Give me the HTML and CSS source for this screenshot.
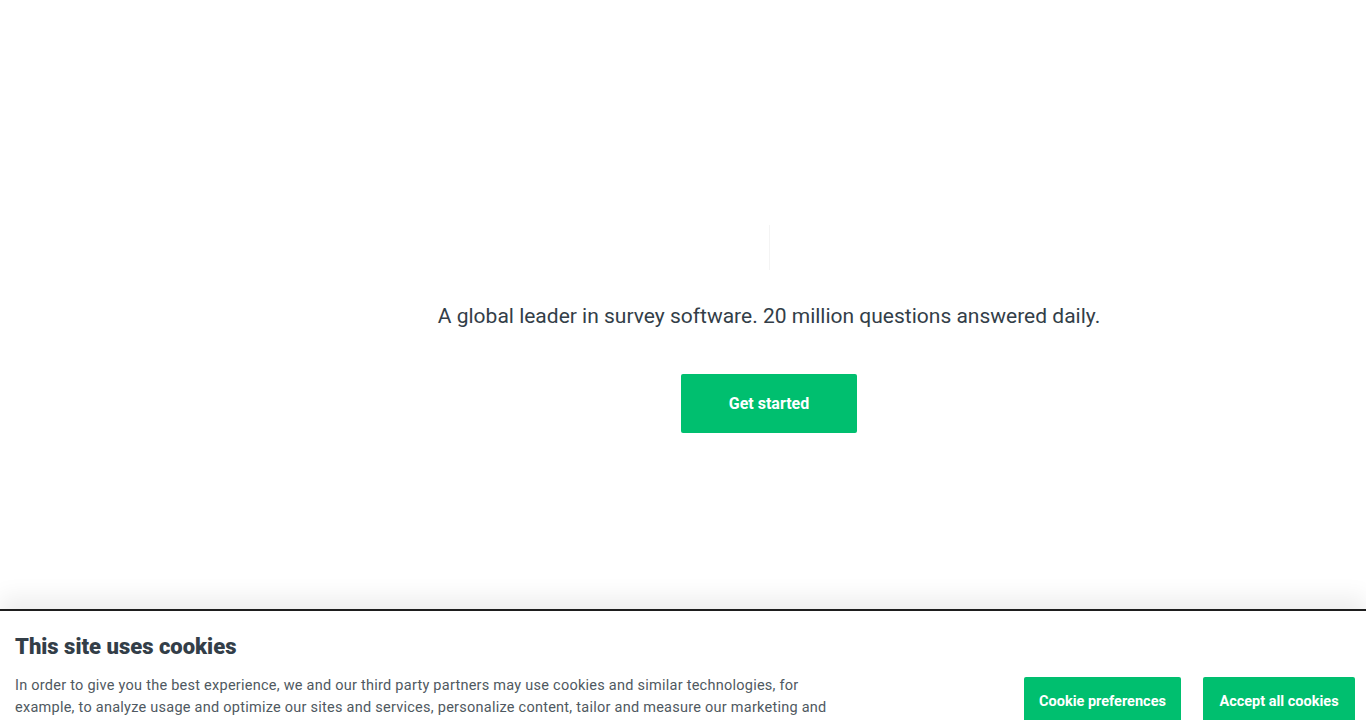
FILE: index.html
```html
<!DOCTYPE html>
<html lang="en">

<head>
    <meta charset="UTF-8">
    <meta name="viewport" content="width=device-width, initial-scale=1.0">
    <title>SurveyMonkey</title>
    <link rel="stylesheet" href="styles.css">
</head>

<body>

    <main class="hero">
        <div class="hero-divider"></div>
        <p class="hero-tagline">A global leader in survey software. 20 million questions answered daily.</p>
        <a class="btn btn-large" href="#">Get started</a>
    </main>

    <div class="cookie-banner">
        <div class="cookie-text">
            <h2>This site uses cookies</h2>
            <p>In order to give you the best experience, we and our third party partners may use cookies and similar technologies, for example, to analyze usage and optimize our sites and services, personalize content, tailor and measure our marketing and to keep the site secure.</p>
        </div>
        <div class="cookie-actions">
            <button class="btn btn-small">Cookie preferences</button>
            <button class="btn btn-small">Accept all cookies</button>
        </div>
    </div>

</body>

</html>
```

FILE: styles.css
```css
html,
body {
    margin: 0;
    padding: 0;
    height: 720px;
    overflow: hidden;
}

body {
    font-family: Roboto, "Liberation Sans", sans-serif;
    background-color: #fff;
    color: #333e48;
}

.hero {
    height: 609px;
    box-sizing: border-box;
    padding: 225px 0 0 172px;
    display: flex;
    flex-direction: column;
    align-items: center;
}

.hero-divider {
    width: 1px;
    height: 45px;
    background-color: #f4f4f4;
    margin-bottom: 32px;
}

.hero-tagline {
    margin: 0 0 44px;
    font-size: 21px;
    line-height: 28px;
    color: #333e48;
}

.btn {
    background-color: #00bf6f;
    color: #fff;
    border: none;
    border-radius: 2px;
    font-family: Roboto, "Liberation Sans", sans-serif;
    font-weight: 700;
    text-decoration: none;
    cursor: pointer;
    display: flex;
    align-items: center;
    justify-content: center;
    box-sizing: border-box;
}

.btn:hover {
    background-color: #00a661;
}

.btn-large {
    width: 176px;
    height: 59px;
    font-size: 16px;
}

.btn-small {
    height: 48px;
    padding: 0 12px;
    font-size: 14.5px;
}

.btn-small:first-child {
    width: 157px;
}

.btn-small:last-child {
    width: 152px;
}

.cookie-banner {
    position: relative;
    border-top: 2px solid #1e1e1e;
    box-shadow: 0 -12px 22px rgba(0, 0, 0, 0.07);
    background-color: #fff;
    display: flex;
    justify-content: space-between;
    padding: 22px 11px 20px 15px;
}

.cookie-text {
    max-width: 820px;
}

.cookie-text h2 {
    margin: 0 0 14px;
    font-size: 22px;
    line-height: 28px;
    font-weight: 900;
    color: #333e48;
}

.cookie-text p {
    margin: 0;
    font-size: 14.5px;
    line-height: 22px;
    letter-spacing: 0.25px;
    color: #4f5961;
}

.cookie-actions {
    display: flex;
    gap: 22px;
    padding-top: 44px;
}
```
